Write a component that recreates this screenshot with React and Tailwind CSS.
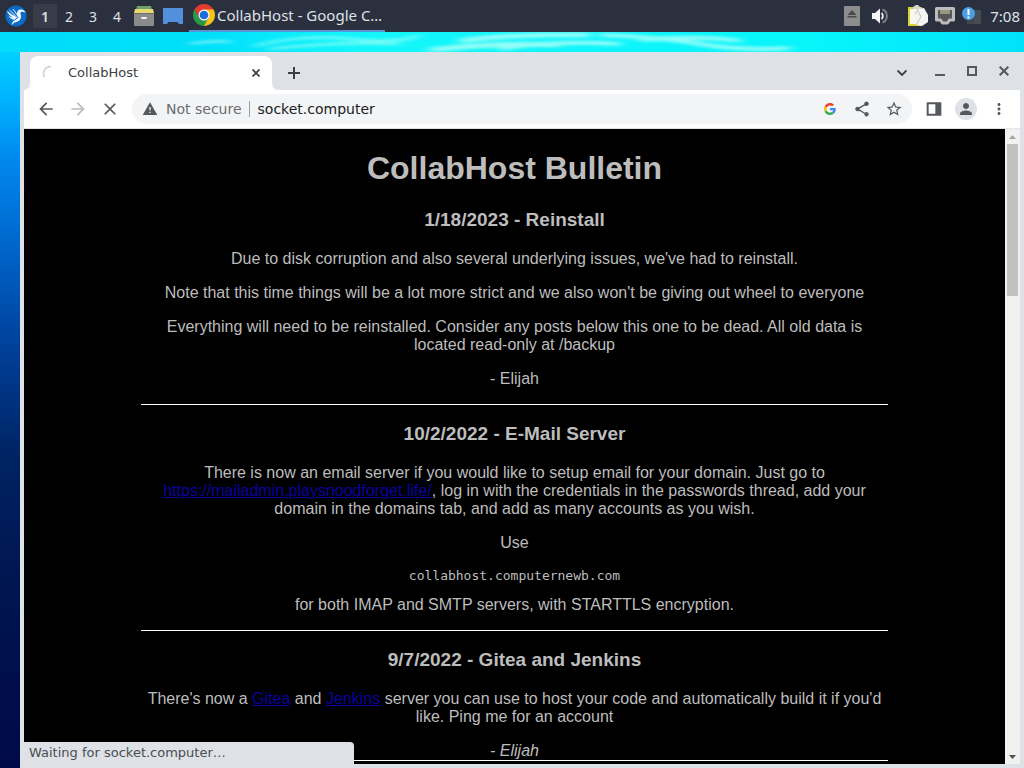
/* ── Taskbar ── */

function BirdLogo() {
  return (
    <svg className="h-[22px] w-[22px]" viewBox="0 0 22 22" aria-hidden="true">
      <circle cx="11" cy="11" r="10.5" fill="#0a6cc9" />
      <path d="M12 9C11.500 6 14 4 16.500 4.500C18.500 4.800 19.500 6 21 7.500L17 6.800C15 6.800 15.500 8.500 16 10.500C16.500 14 14 17 9.500 17.500L6.500 20C7 17.500 8 16 10 15C7 14.800 4.500 13 3.500 10.500C5 11.800 6.500 12.400 8 12.500C5 11 2.500 8.500 2 5.500C5 9 8.500 10.500 12.500 12.500Z" fill="#eef6ff" />
      <path d="M8 4L13 11M5 5.500L11 11.500" stroke="#eef6ff" strokeWidth="1" />
      <path d="M9.500 15L13.500 12" stroke="#0a6cc9" strokeWidth="1" />
    </svg>
  );
}

function FileCabinetIcon() {
  return (
    <svg className="h-5 w-5" viewBox="0 0 20 20" aria-hidden="true">
      <path d="M3 0H17L18 4H2Z" fill="#6fa06c" />
      <path d="M1 3H19L20 7H0Z" fill="#ead96c" />
      <path d="M0 7H20V20H0Z" fill="#8b8b8b" />
      <path d="M0 7H20V8H0Z" fill="#6f6f6f" />
      <rect x="7" y="11" width="6" height="2" rx="1" fill="#f2f2f2" />
    </svg>
  );
}

function DesktopIcon() {
  return (
    <svg className="h-4 w-5" viewBox="0 0 20 16" aria-hidden="true">
      <path d="M0 0H20V16H16L14.500 14H5.500L4 16H0Z" fill="#5290db" />
    </svg>
  );
}

function ChromeIcon() {
  return (
    <svg className="h-[22px] w-[22px] shrink-0" viewBox="0 0 48 48" aria-hidden="true">
      <path d="M24 24L3.220 12A24 24 0 0 1 44.780 12Z" fill="#e33b2e" />
      <path d="M24 24L44.780 12A24 24 0 0 1 24 48Z" fill="#fbc116" />
      <path d="M24 12H44.780L34.390 30Z" fill="#fbc116" />
      <path d="M34.390 30L24 48L13.610 30Z" fill="#2a9b48" />
      <path d="M13.610 30L3.220 12L24 12Z" fill="#e33b2e" />
      <path d="M3.220 12L13.610 30L24 48A24 24 0 0 1 3.220 12Z" fill="#2a9b48" />
      <circle cx="24" cy="24" r="12" fill="#fff" />
      <circle cx="24" cy="24" r="9.500" fill="#1a6ae0" />
    </svg>
  );
}

function EjectIcon() {
  return (
    <svg className="h-5 w-4" viewBox="0 0 16 20" aria-hidden="true">
      <rect width="16" height="20" rx="1" fill="#8d8d8d" />
      <path d="M8 4L12.500 9H3.500ZM3.500 10H12.500V11.500H3.500Z" fill="#4b4b4b" />
    </svg>
  );
}

function VolumeIcon() {
  return (
    <svg className="h-4 w-4" viewBox="0 0 16 16" fill="none" aria-hidden="true">
      <path d="M0 5H3L8 0.500V15.500L3 11H0Z" fill="#f5f5f5" />
      <path d="M9.500 5A4 4 0 0 1 9.500 11" stroke="#f5f5f5" strokeWidth="1.800" />
      <path d="M10.500 1.500A7 7 0 0 1 10.500 14.500" stroke="#7b7e86" strokeWidth="2" />
    </svg>
  );
}

function ClipboardIcon() {
  return (
    <svg className="h-[22px] w-5" viewBox="0 0 20 22" aria-hidden="true">
      <path d="M0 2H14V21H0Z" fill="#d9d233" />
      <path d="M2 4H13V19H2Z" fill="#f7f7ee" />
      <path d="M5 2L8 0H10L12 2V4H5Z" fill="#d4d4d4" />
      <path d="M9 4L16 3L20 10V17L14 21L8 20Z" fill="#f4f4f4" />
      <path d="M9 4L13 12L8 20M7 9L9 6" fill="none" stroke="#c2c2c2" />
    </svg>
  );
}

function NetworkIcon() {
  return (
    <svg className="h-[18px] w-5" viewBox="0 0 20 18" aria-hidden="true">
      <path d="M1.500 1.500H18.500V13H14.500L12.500 16H7.500L5.500 13H1.500Z" fill="#55575a" stroke="#bcbcbc" strokeWidth="3" strokeLinejoin="round" />
      <path d="M6 3V7M8 3V7M10 3V7M12 3V7M14 3V7" stroke="#ddd7a0" />
    </svg>
  );
}

function NoticeIcon() {
  return (
    <svg className="h-[18px] w-5" viewBox="0 0 20 18" aria-hidden="true">
      <path d="M5 3H19V17H5Z" fill="#3f4650" />
      <path d="M12 3H19V17H12Z" fill="#474c52" />
      <circle cx="6.500" cy="6.500" r="6.500" fill="#4a9fe4" />
      <path d="M6.500 2V8M6.500 9.500V11.500" stroke="#fff" strokeWidth="2" />
    </svg>
  );
}

function Taskbar() {
  return (
    <header className="flex h-8 shrink-0 items-center bg-[#2b303f] pr-1 pl-[5px] font-['Noto_Sans',sans-serif] text-[#dfe1e6]">
      <button aria-label="Menu"><BirdLogo /></button>
      <nav className="ml-[6px] flex text-[14px]" aria-label="Workspaces">
        <button className="h-[24px] w-6 bg-[#383c49] font-semibold">1</button>
        <button className="h-[24px] w-6">2</button>
        <button className="h-[24px] w-6">3</button>
        <button className="h-[24px] w-6">4</button>
      </nav>
      <div className="ml-[5px] flex items-center gap-[9px]">
        <button aria-label="Files"><FileCabinetIcon /></button>
        <button aria-label="Show desktop"><DesktopIcon /></button>
      </div>
      <button className="ml-[6px] flex h-8 w-[196px] items-center border-b-2 border-[#5a93d6] pl-1 text-[15px] whitespace-nowrap">
        <ChromeIcon />
        <span className="ml-[2px]">CollabHost - Google C…</span>
      </button>
      <div className="ml-auto flex items-center">
        <button className="mr-3" aria-label="Removable media"><EjectIcon /></button>
        <button className="mr-5" aria-label="Volume"><VolumeIcon /></button>
        <div className="flex items-center gap-[7px]">
          <button aria-label="Clipboard"><ClipboardIcon /></button>
          <button aria-label="Network"><NetworkIcon /></button>
          <button aria-label="Notifications"><NoticeIcon /></button>
        </div>
        <time className="ml-2 text-[15px]">7:08</time>
      </div>
    </header>
  );
}

/* ── Desktop background ── */

function WaterSurface() {
  return (
    <svg className="absolute inset-x-0 top-0 h-5 w-full" viewBox="0 0 1024 20" preserveAspectRatio="none" aria-hidden="true">
      <defs>
        <linearGradient id="surface" x1="0" x2="1" y1="0" y2="0">
          <stop offset="0" stopColor="#00dcfa" />
          <stop offset="0.200" stopColor="#00dffa" />
          <stop offset="0.350" stopColor="#14f6fa" />
          <stop offset="0.800" stopColor="#08f4fb" />
          <stop offset="1" stopColor="#00e2fb" />
        </linearGradient>
        <filter id="soften" x="-10%" y="-100%" width="120%" height="300%"><feGaussianBlur stdDeviation="6 1.500" /></filter>
      </defs>
      <rect width="1024" height="20" fill="url(#surface)" />
      <g fill="none" stroke="#b8fff6" strokeWidth="2" opacity="0.800" filter="url(#soften)">
        <path d="M190 12Q215 8 230 10M255 14Q300 2 350 7T420 3M270 17Q340 9 400 12" />
        <path d="M430 18Q500 10 560 13M460 9Q510 2 590 3" strokeWidth="5" />
        <path d="M500 17Q550 8 620 12M600 3Q660 5 700 12T790 16M640 8Q700 3 740 9" strokeWidth="4" />
      </g>
    </svg>
  );
}

/* ── Browser chrome ── */

function TabStrip() {
  return (
    <div className="flex h-[38px] items-end justify-between bg-[#dee1e6] pr-2 text-[#3c4043]">
      <div className="flex items-end">
        <svg className="h-2 w-[6px]" viewBox="0 0 6 8" aria-hidden="true"><path d="M6 0V8H0Q6 8 6 0Z" fill="#fff" /></svg>
        <div className="flex h-[34px] w-[242px] items-center rounded-t-lg bg-white pr-2 pl-3 text-[13px]">
          <svg className="h-4 w-4" viewBox="0 0 16 16" fill="none" aria-hidden="true">
            <path d="M2.500 12A7 7 0 0 1 9 1.500" stroke="#c9d0d8" strokeWidth="1.500" />
          </svg>
          <span className="ml-[10px]">CollabHost</span>
          <button className="ml-auto flex h-4 w-4 items-center justify-center" aria-label="Close tab">
            <svg className="h-2 w-2" viewBox="0 0 8 8" aria-hidden="true"><path d="M0.500 0.500L7.500 7.500M7.500 0.500L0.500 7.500" stroke="#3c4043" strokeWidth="1.700" /></svg>
          </button>
        </div>
        <svg className="h-2 w-[6px]" viewBox="0 0 6 8" aria-hidden="true"><path d="M0 0V8H6Q0 8 0 0Z" fill="#fff" /></svg>
        <button className="ml-1 flex h-[34px] w-6 items-center justify-center" aria-label="New tab">
          <svg className="h-3 w-3" viewBox="0 0 12 12" aria-hidden="true"><path d="M6 0V12M0 6H12" stroke="#3c4043" strokeWidth="2" /></svg>
        </button>
      </div>
      <div className="flex h-[38px] items-center">
        <button className="mr-[22px] flex w-4 justify-center pt-1" aria-label="Search tabs">
          <svg className="h-2 w-[10px]" viewBox="0 0 10 8" fill="none" aria-hidden="true"><path d="M0.500 1.500L5 6L9.500 1.500" stroke="#3c4043" strokeWidth="1.800" /></svg>
        </button>
        <div className="flex gap-4">
          <button className="flex h-4 w-4 items-center justify-center" aria-label="Minimize">
            <svg className="h-[10px] w-[10px]" viewBox="0 0 10 10" aria-hidden="true"><path d="M0 9H10" stroke="#55585c" strokeWidth="2" /></svg>
          </button>
          <button className="flex h-4 w-4 items-center justify-center" aria-label="Maximize">
            <svg className="h-[10px] w-[10px]" viewBox="0 0 10 10" fill="none" aria-hidden="true"><path d="M1 1H9V9H1Z" stroke="#55585c" strokeWidth="2" /></svg>
          </button>
          <button className="flex h-4 w-4 items-center justify-center" aria-label="Close window">
            <svg className="h-[10px] w-[10px]" viewBox="0 0 10 10" aria-hidden="true"><path d="M0.700 0.700L9.300 9.300M9.300 0.700L0.700 9.300" stroke="#55585c" strokeWidth="2" /></svg>
          </button>
        </div>
      </div>
    </div>
  );
}

function GoogleG() {
  return (
    <svg className="h-3 w-3" viewBox="0 0 48 48" aria-hidden="true">
      <path fill="#ea4335" d="M24 9.500c3.540 0 6.710 1.220 9.210 3.600l6.850-6.850C35.900 2.380 30.470 0 24 0 14.620 0 6.510 5.380 2.560 13.220l7.980 6.190C12.430 13.720 17.740 9.500 24 9.500z" />
      <path fill="#4285f4" d="M46.980 24.550c0-1.570-.15-3.090-.38-4.550H24v9.020h12.940c-.58 2.960-2.260 5.480-4.780 7.180l7.730 6c4.510-4.180 7.090-10.360 7.090-17.650z" />
      <path fill="#fbbc05" d="M10.530 28.590c-.48-1.450-.76-2.990-.76-4.590s.27-3.140.76-4.590l-7.980-6.190C.92 16.460 0 20.120 0 24s.92 7.540 2.560 10.780l7.970-6.190z" />
      <path fill="#34a853" d="M24 48c6.480 0 11.930-2.130 15.890-5.810l-7.730-6c-2.150 1.450-4.920 2.300-8.160 2.300-6.260 0-11.570-4.220-13.470-9.910l-7.980 6.190C6.510 42.620 14.620 48 24 48z" />
    </svg>
  );
}

const glyphs = {
  back: "M20 11H7.830l5.590-5.590L12 4l-8 8 8 8 1.410-1.410L7.830 13H20v-2z",
  forward: "M12 4l-1.410 1.410L16.170 11H4v2h12.170l-5.580 5.590L12 20l8-8z",
  stop: "M19 6.410L17.590 5 12 10.590 6.410 5 5 6.410 10.590 12 5 17.590 6.410 19 12 13.410 17.590 19 19 17.590 13.410 12z",
  warning: "M1 21h22L12 2 1 21zm12-3h-2v-2h2v2zm0-4h-2v-5h2v5z",
  share: "M18 16.080c-.76 0-1.440.3-1.960.77L8.910 12.700c.05-.23.09-.46.09-.7s-.04-.47-.09-.7l7.050-4.110c.54.5 1.250.81 2.040.81 1.660 0 3-1.340 3-3s-1.340-3-3-3-3 1.340-3 3c0 .24.04.47.09.7L8.040 9.810C7.500 9.310 6.790 9 6 9c-1.660 0-3 1.340-3 3s1.340 3 3 3c.79 0 1.500-.31 2.040-.81l7.120 4.160c-.05.21-.08.43-.08.65 0 1.610 1.310 2.920 2.920 2.920s2.920-1.310 2.920-2.920-1.310-2.920-2.920-2.920z",
  star: "M22 9.240l-7.190-.62L12 2 9.190 8.630 2 9.240l5.460 4.730L5.820 21 12 17.270 18.180 21l-1.630-7.030L22 9.240zM12 15.400l-3.760 2.270 1-4.280-3.320-2.880 4.380-.38L12 6.100l1.710 4.040 4.380.38-3.320 2.880 1 4.280L12 15.400z",
  panel: "M1 2h22v20H1V2zm3 3v14h10V5H4z",
  person: "M12 12c2.210 0 4-1.790 4-4s-1.790-4-4-4-4 1.790-4 4 1.790 4 4 4zm0 2c-2.670 0-8 1.340-8 4v2h16v-2c0-2.660-5.330-4-8-4z",
  more: "M12 8c1.100 0 2-.9 2-2s-.9-2-2-2-2 .9-2 2 .9 2 2 2zm0 2c-1.100 0-2 .9-2 2s.9 2 2 2 2-.9 2-2-.9-2-2-2zm0 6c-1.100 0-2 .9-2 2s.9 2 2 2 2-.9 2-2-.9-2-2-2z",
};

function Glyph({ name, className }) {
  return (
    <svg className={className} viewBox="0 0 24 24" fill="currentColor" aria-hidden="true">
      <path d={glyphs[name]} fillRule="evenodd" />
    </svg>
  );
}

function Toolbar() {
  return (
    <div className="flex h-[39px] items-center border-b border-[#e3e5e8] bg-white pr-3 pl-3 text-[#55585c]">
      <div className="flex gap-3">
        <button aria-label="Back"><Glyph name="back" className="h-5 w-5" /></button>
        <button className="text-[#b9bbbe]" aria-label="Forward" disabled><Glyph name="forward" className="h-5 w-5" /></button>
        <button aria-label="Stop loading"><Glyph name="stop" className="h-5 w-5" /></button>
      </div>
      <div className="ml-3 flex h-[30px] flex-1 items-center rounded-full bg-[#f3f4f5] pr-[9px] pl-[10px] text-[14px]">
        <Glyph name="warning" className="h-4 w-4" />
        <span className="ml-2 text-[#6a6d71]">Not secure</span>
        <span className="ml-[7px] h-4 border-l border-[#9a9da1]" />
        <input
          className="ml-2 min-w-0 flex-1 bg-transparent text-[#202124] outline-none"
          aria-label="Address"
          defaultValue="socket.computer"
        />
        <div className="flex items-center gap-[14px]">
          <button className="flex w-[18px] justify-center" aria-label="Search with Google"><GoogleG /></button>
          <button aria-label="Share"><Glyph name="share" className="h-[18px] w-[18px]" /></button>
          <button aria-label="Bookmark"><Glyph name="star" className="h-[18px] w-[18px]" /></button>
        </div>
      </div>
      <div className="ml-[14px] flex items-center gap-[13px]">
        <button aria-label="Side panel"><Glyph name="panel" className="h-4 w-4" /></button>
        <button className="flex h-[22px] w-[22px] items-center justify-center rounded-full bg-[#dee1e6]" aria-label="Profile">
          <Glyph name="person" className="h-[18px] w-[18px]" />
        </button>
        <button aria-label="More"><Glyph name="more" className="h-[18px] w-[18px]" /></button>
      </div>
    </div>
  );
}

function Scrollbar() {
  return (
    <div className="flex w-[15px] shrink-0 flex-col items-center bg-[#f1f1f1]" aria-hidden="true">
      <svg className="h-[15px] w-[15px]" viewBox="0 0 15 15"><path d="M4 10L7.500 6L11 10Z" fill="#a3a3a3" /></svg>
      <div className="h-[152px] w-[11px] bg-[#c1c1c1]" />
      <svg className="mt-auto h-[15px] w-[15px]" viewBox="0 0 15 15"><path d="M4 6L7.500 10L11 6Z" fill="#505050" /></svg>
    </div>
  );
}

/* ── Page ── */

function PostTitle({ children }) {
  return <h3 className="mt-[18px] mb-[19px] text-[19px] leading-[22px] font-bold">{children}</h3>;
}

function PostLink({ href, children }) {
  return <a href={href} className="text-[#0b00a0] underline">{children}</a>;
}

function Bulletin() {
  return (
    <main className="min-w-0 flex-1 overflow-hidden bg-black font-['Liberation_Sans',Arial,sans-serif] text-[16px] leading-[18px] text-[#bdbdbd]">
      <div className="mx-auto max-w-[747px] text-center">
        <h1 className="mt-[21px] mb-[22px] text-[32px] leading-[37px] font-bold">CollabHost Bulletin</h1>

        <PostTitle>1/18/2023 - Reinstall</PostTitle>
        <p className="my-4">Due to disk corruption and also several underlying issues, we've had to reinstall.</p>
        <p className="my-4">Note that this time things will be a lot more strict and we also won't be giving out wheel to everyone</p>
        <p className="my-4">Everything will need to be reinstalled. Consider any posts below this one to be dead. All old data is located read-only at /backup</p>
        <p className="my-4">- Elijah</p>
        <hr className="border-white" />

        <PostTitle>10/2/2022 - E-Mail Server</PostTitle>
        <p className="my-4">
          There is now an email server if you would like to setup email for your domain. Just go to{" "}
          <PostLink href="https://mailadmin.playsnoodforget.life/">https://mailadmin.playsnoodforget.life/</PostLink>, log in with
          the credentials in the passwords thread, add your domain in the domains tab, and add as many accounts as you wish.
        </p>
        <p className="my-4">Use</p>
        <pre className="my-[13px] font-['DejaVu_Sans_Mono',monospace] text-[13px] leading-[15px]">collabhost.computernewb.com</pre>
        <p className="mt-[13px] mb-4">for both IMAP and SMTP servers, with STARTTLS encryption.</p>
        <hr className="border-white" />

        <PostTitle>9/7/2022 - Gitea and Jenkins</PostTitle>
        <p className="my-4">
          There's now a <PostLink href="#gitea">Gitea</PostLink> and <PostLink href="#jenkins">Jenkins</PostLink> server you can use
          to host your code and automatically build it if you'd like. Ping me for an account
        </p>
        <em>- Elijah</em>
        <hr className="border-white" />
      </div>
    </main>
  );
}

export default function App() {
  return (
    <div className="flex h-screen flex-col overflow-hidden">
      <Taskbar />
      <div className="relative flex min-h-0 flex-1 bg-[linear-gradient(to_bottom,#00dcff_0%,#00b4ff_9%,#0089ee_17%,#0066cc_29%,#003f98_43%,#002261_58%,#001550_75%,#000a48_100%)] pt-5 pl-5">
        <WaterSurface />
        <section className="relative flex min-w-0 flex-1 flex-col bg-[#dee1e6] px-1 pb-1 font-['DejaVu_Sans',sans-serif]">
          <TabStrip />
          <Toolbar />
          <div className="flex min-h-0 flex-1">
            <Bulletin />
            <Scrollbar />
          </div>
          <div role="status" className="absolute bottom-0 left-1 h-[26px] w-[330px] rounded-tr-sm bg-[#dee1e6] px-[5px] pt-[2px] text-[13px] leading-[18px] text-[#4a4d51]">
            Waiting for socket.computer…
          </div>
        </section>
      </div>
    </div>
  );
}
